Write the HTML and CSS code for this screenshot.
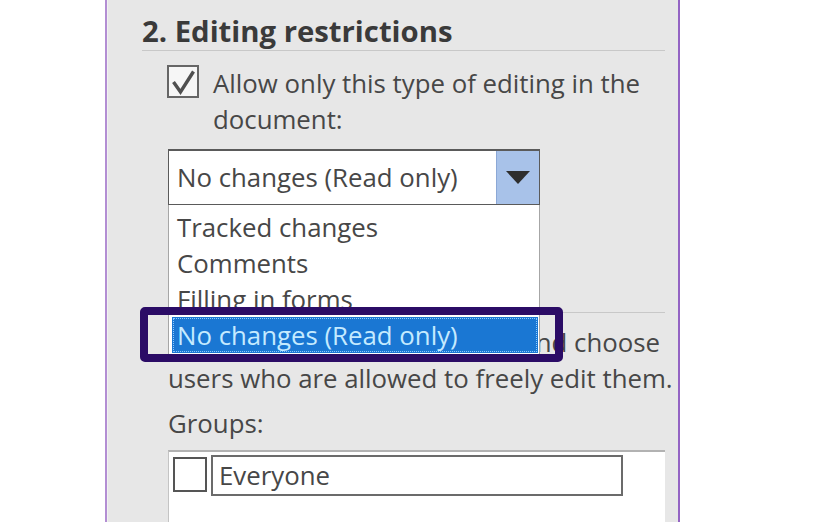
FILE: index.html
```html
<!DOCTYPE html>
<html lang="en">
<head>
<meta charset="utf-8">
<title>Restrict Editing</title>
<link rel="stylesheet" href="styles.css">
</head>
<body>
<div class="pane">
  <section class="restrict">
    <h2 class="pane-title">2. Editing restrictions</h2>
    <label class="check-row">
      <span class="checkbox">
        <svg class="check-mark" width="32" height="33" viewBox="0 0 32 33"><polyline points="6.5,17 13.5,27 26.5,6.5" fill="none" stroke="#4f4f4f" stroke-width="3.4" stroke-linejoin="miter"/></svg>
      </span>
      <span class="check-label">Allow only this type of editing in the document:</span>
    </label>
    <div class="combo">
      <div class="combo-box">
        <span class="combo-value">No changes (Read only)</span>
        <span class="combo-btn"><svg width="24" height="13" viewBox="0 0 24 13"><polygon points="0,0 24,0 12,13" fill="#2e2e2e"/></svg></span>
      </div>
      <ul class="combo-list">
        <li class="combo-item">Tracked changes</li>
        <li class="combo-item">Comments</li>
        <li class="combo-item">Filling in forms</li>
        <li class="combo-item selected">No changes (Read only)</li>
      </ul>
    </div>
  </section>
  <section class="exceptions">
    <div class="section-rule"></div>
    <p class="desc">Select parts of the document and choose<br>users who are allowed to freely edit them.</p>
    <div class="groups-label">Groups:</div>
    <div class="groups-box">
      <div class="group-row">
        <span class="checkbox empty"></span>
        <span class="group-name">Everyone</span>
      </div>
    </div>
  </section>
  <div class="callout"></div>
</div>
</body>
</html>
```
FILE: styles.css
```css
html, body {
  margin: 0;
  padding: 0;
  background: #ffffff;
}
body {
  width: 822px;
  height: 522px;
  overflow: hidden;
  font-family: "Open Sans", "Noto Sans", sans-serif;
  color: #474747;
}
.pane {
  position: relative;
  box-sizing: border-box;
  margin-left: 105px;
  width: 575px;
  height: 522px;
  overflow: hidden;
  background: #e7e7e7;
  border-left: 2px solid #b38ed3;
  border-right: 2px solid #9464c4;
  box-shadow: inset 1px 0 0 #f1f1f1;
  padding: 0 13px 0 35px;
}
.pane-title {
  margin: 13px 0 0 0;
  padding-bottom: 1px;
  font-size: 29.3px;
  font-weight: 700;
  line-height: 36px;
  color: #3a3a3a;
  border-bottom: 1px solid #c8c8c8;
}
.check-row {
  display: flex;
  align-items: flex-start;
  gap: 14px;
  margin: 14px 0 0 25px;
}
.checkbox {
  flex: none;
  box-sizing: border-box;
  width: 32px;
  height: 33px;
  border: 2px solid #666666;
  background: #f6f6f6;
  position: relative;
}
.check-mark {
  display: block;
  margin: -2px 0 0 -2px;
}
.check-label {
  font-size: 25.8px;
  line-height: 36px;
}
.combo {
  position: relative;
  margin: 12px 0 0 26px;
  width: 372px;
}
.combo-box {
  box-sizing: border-box;
  height: 56px;
  display: flex;
  background: #ffffff;
  border: 1px solid #5a5a5a;
  border-top-width: 2px;
}
.combo-value {
  flex: 1;
  padding-left: 8px;
  font-size: 25.8px;
  line-height: 52px;
}
.combo-btn {
  width: 42px;
  display: flex;
  align-items: center;
  justify-content: center;
  background: #a8c2e9;
  border-left: 1px solid #8ca8d6;
}
.combo-list {
  position: absolute;
  top: 100%;
  left: 0;
  box-sizing: border-box;
  width: 372px;
  margin: 0;
  padding: 4px 0 2px;
  list-style: none;
  background: #ffffff;
  border-left: 1px solid #a6a6a6;
  border-right: 1px solid #a6a6a6;
}
.combo-item {
  margin: 0 1px 0 3px;
  padding-left: 5px;
  font-size: 25.8px;
  line-height: 36px;
  color: #474747;
}
.combo-item.selected {
  background: #1a77d3;
  color: #c4eaff;
  outline: 1px dotted #8fcaff;
  outline-offset: -2px;
}
.section-rule {
  margin: 71px 0 0 26px;
  height: 36px;
  border-bottom: 1px solid #c8c8c8;
}
.desc {
  margin: 11px 0 0 26px;
  font-size: 25.8px;
  line-height: 36px;
  white-space: nowrap;
}
.groups-label {
  margin: 9px 0 0 26px;
  font-size: 25.8px;
  line-height: 36px;
}
.groups-box {
  margin: 9px 0 0 26px;
  height: 100px;
  background: #ffffff;
  border-top: 2px solid #b2b2b2;
  border-left: 1px solid #c4c4c4;
  padding: 3px 0 0 4px;
}
.group-row {
  display: flex;
  align-items: flex-start;
  gap: 4px;
}
.checkbox.empty {
  width: 34px;
  height: 35px;
  margin-top: 2px;
  background: #ffffff;
  border-color: #555555;
}
.group-name {
  box-sizing: border-box;
  width: 412px;
  height: 41px;
  padding-left: 6px;
  border: 2px solid #6b6b6b;
  font-size: 25.8px;
  line-height: 37px;
}
.callout {
  position: absolute;
  left: 33px;
  top: 307px;
  box-sizing: border-box;
  width: 423px;
  height: 55px;
  border: 8px solid #2b0c66;
  border-radius: 5px;
}
```
